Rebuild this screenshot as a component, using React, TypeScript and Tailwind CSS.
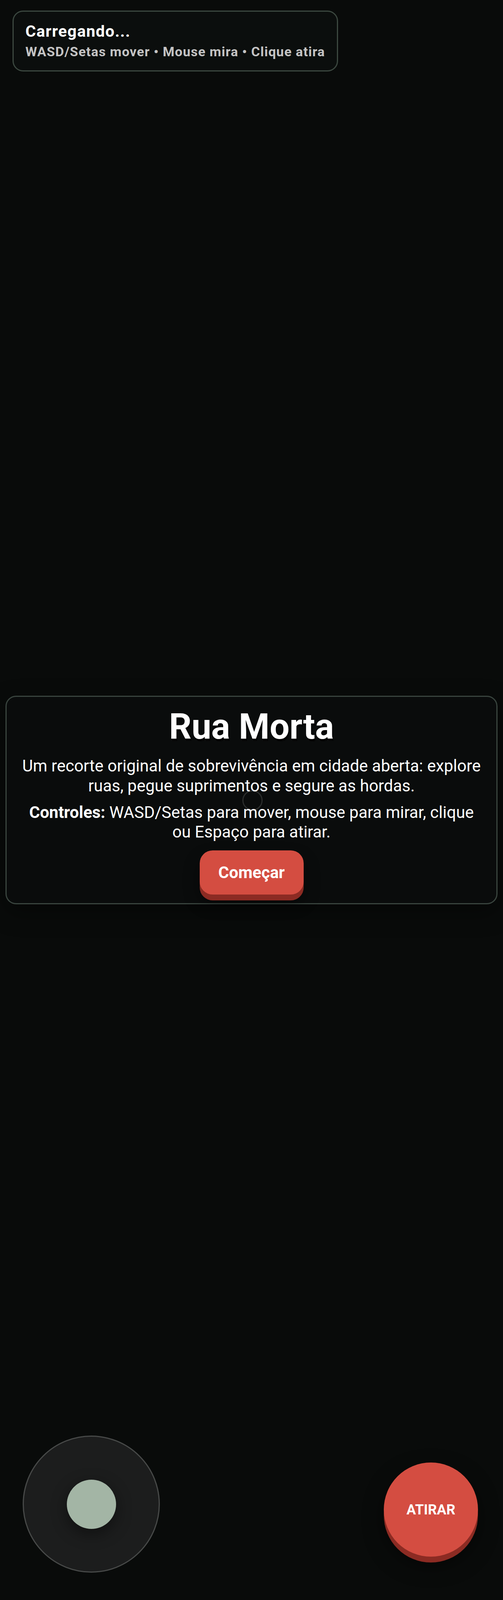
import React from "react";

export default function App() {
  return (
    <div className="relative h-screen w-full overflow-hidden bg-[#090b0a] font-['Roboto','Liberation_Sans',sans-serif] text-white">
      {/* game canvas layer: player ring */}
      <div className="absolute inset-0 flex items-center justify-center">
        <svg width="54" height="54" viewBox="0 0 54 54" className="translate-x-[2px] translate-y-[1px]">
          <circle cx="27" cy="27" r="24.5" fill="none" stroke="#5a5c5b" strokeWidth="3" />
        </svg>
      </div>

      {/* HUD */}
      <div className="absolute left-[32px] top-[27px] rounded-[27px] border-[3px] border-[#3b473f] bg-[#0b0e0d] px-[30px] pb-[28px] pt-[26px]">
        <div className="text-[41px] font-bold leading-[48px] tracking-[1.4px] text-white">Carregando...</div>
        <div className="mt-[8px] text-[34px] font-bold leading-[40px] tracking-[1.25px] text-[#c4c4c4]">
          WASD/Setas mover • Mouse mira • Clique atira
        </div>
      </div>

      {/* Start modal */}
      <div className="absolute inset-0 flex items-center justify-center px-[14px]">
        <div className="w-full rounded-[27px] border-[3px] border-[#39443e] bg-[rgba(12,14,13,0.6)] px-[33px] pb-[22px] pt-[27px] text-center shadow-[0_20px_60px_rgba(0,0,0,0.4)]">
          <h1 className="text-[90px] font-bold leading-[99px] text-white [text-shadow:2px_6px_0_rgba(0,0,0,0.7)]">
            Rua Morta
          </h1>
          <p className="mt-[26px] text-[42px] leading-[1.2] text-white">
            Um recorte original de sobrevivência em cidade aberta: explore ruas, pegue suprimentos e segure as hordas.
          </p>
          <p className="mt-[18px] text-[42px] leading-[1.2] text-white">
            <strong className="font-bold">Controles:</strong> WASD/Setas para mover, mouse para mirar, clique ou Espaço para atirar.
          </p>
          <button className="mt-[21px] inline-block rounded-[33px] bg-[#d44d41] px-[48px] py-[31px] text-[42px] font-bold leading-[51px] text-white shadow-[0_15px_0_#8c2b23,0_22px_40px_rgba(0,0,0,0.45)]">
            Começar
          </button>
        </div>
      </div>

      {/* Joystick */}
      <div className="absolute bottom-[70px] left-[58px] flex size-[351px] items-center justify-center rounded-full border-[3px] border-[#474948] bg-[#1c1d1d]">
        <div className="size-[126px] rounded-full bg-[#a3b5a5] shadow-[0_12px_40px_rgba(0,0,0,0.45)]" />
      </div>

      {/* Fire button */}
      <button className="absolute bottom-[111px] right-[64px] flex size-[241px] items-center justify-center rounded-full bg-[#d44d41] text-[36px] font-bold text-white shadow-[0_15px_0_#8c2b23,0_22px_50px_rgba(0,0,0,0.5)]">
        ATIRAR
      </button>
    </div>
  );
}
